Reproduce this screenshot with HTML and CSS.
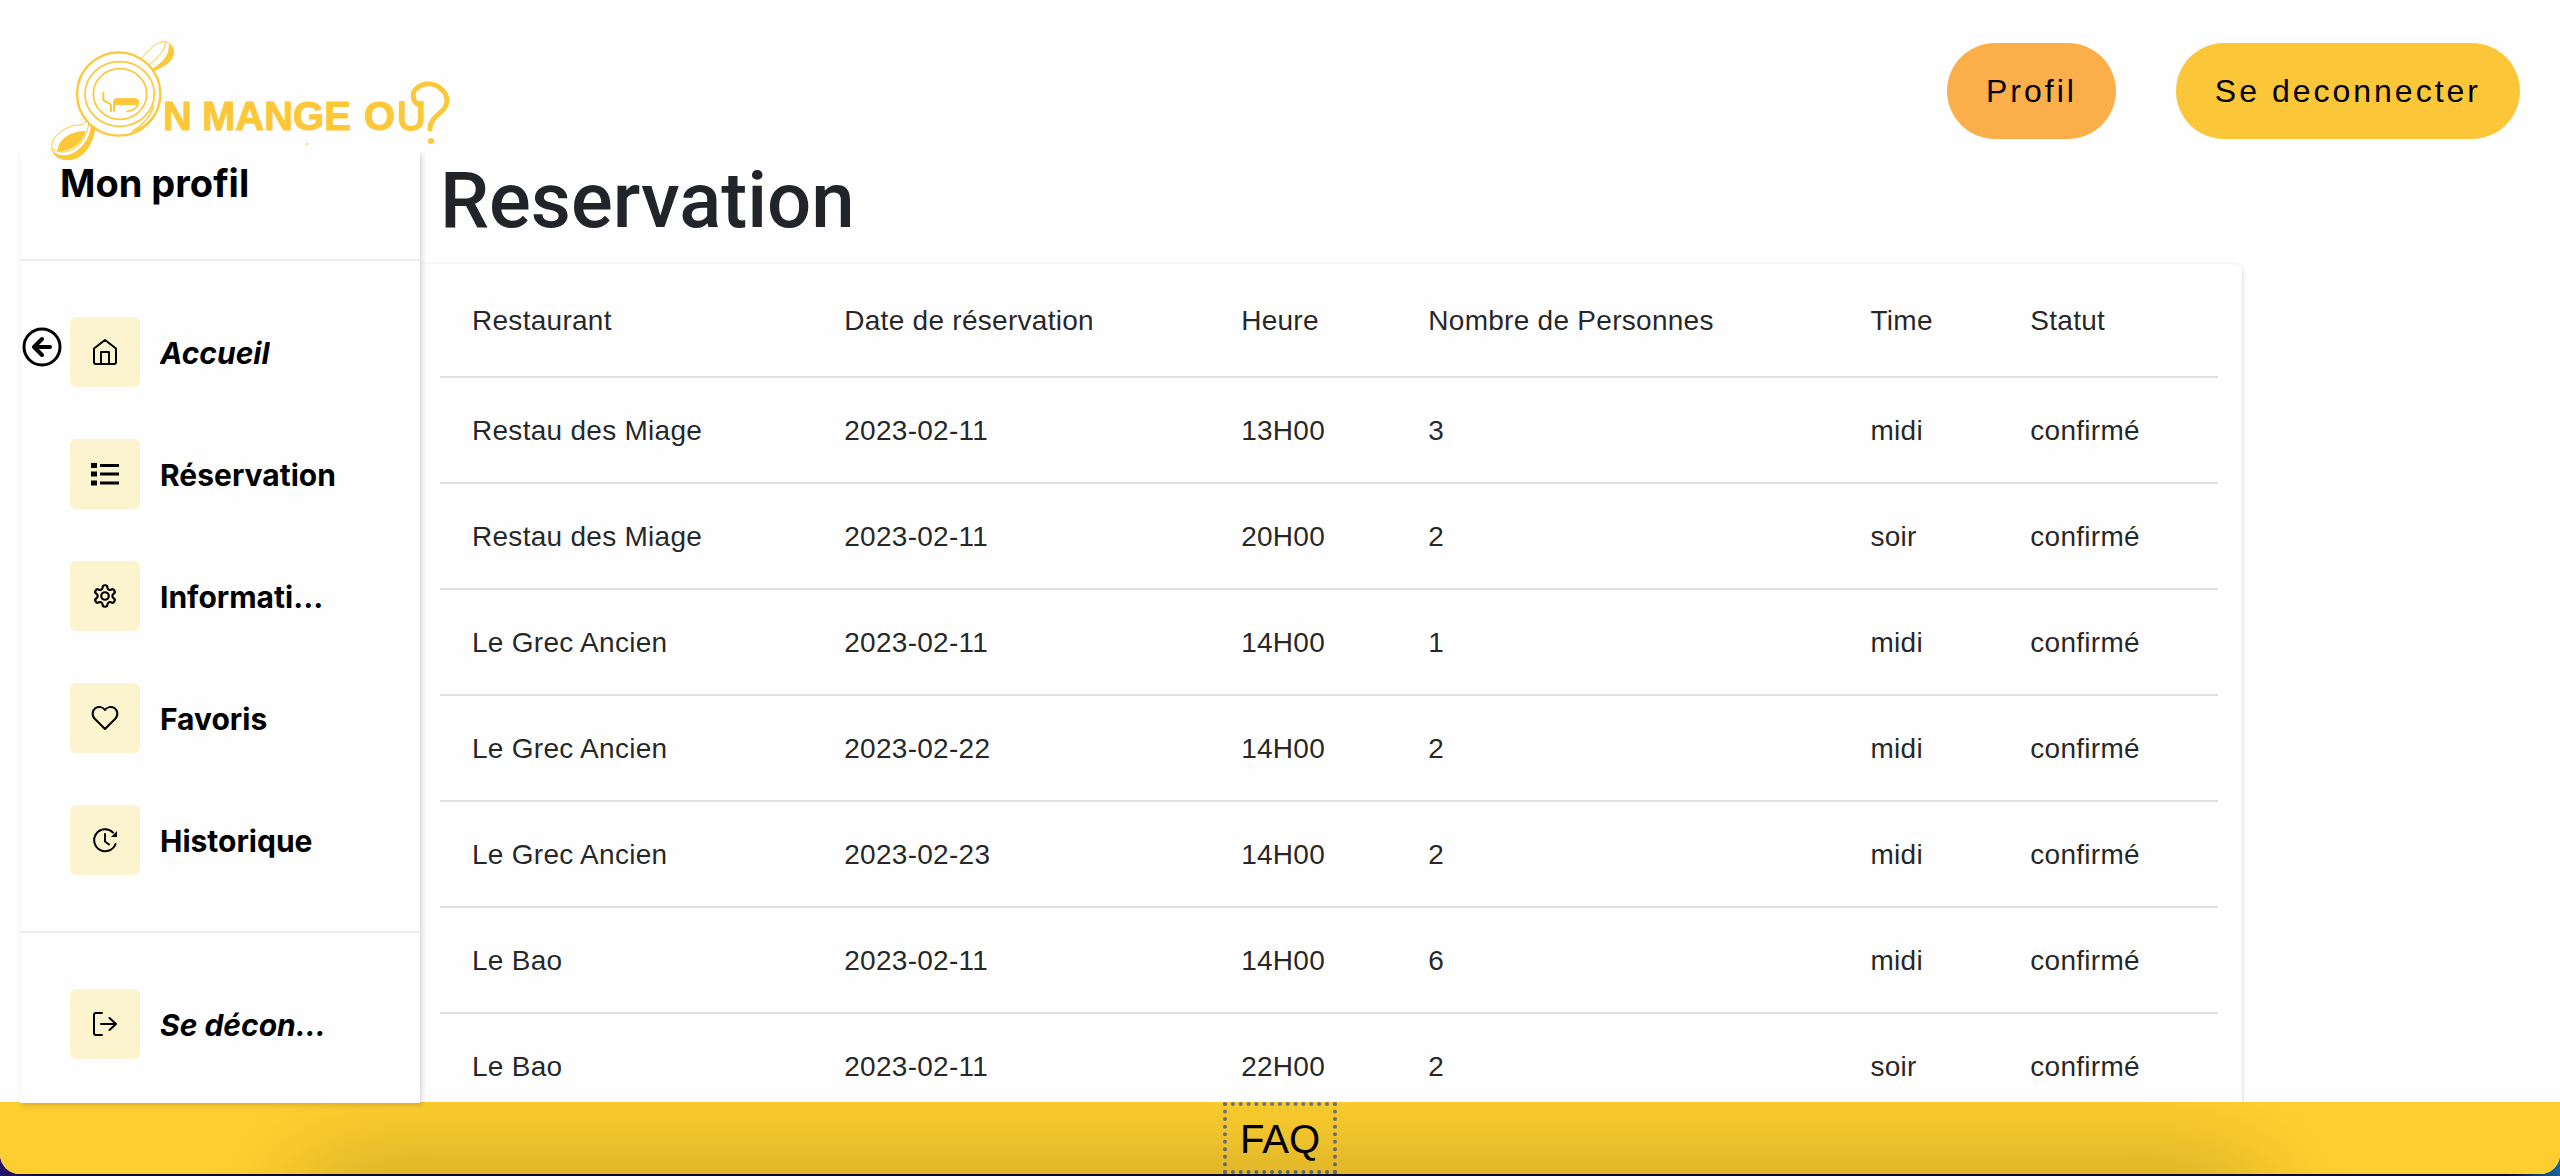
FILE: index.html
```html
<!DOCTYPE html>
<html lang="fr">
<head>
  <meta charset="utf-8">
  <meta name="viewport" content="width=device-width, initial-scale=1">
  <title>On mange où ? - Mon profil</title>
  <link rel="stylesheet" href="styles.css">
</head>
<body>
  <div class="app">
    <header class="header">
      <a class="logo" href="#" aria-label="On mange où ?">
        <svg class="logo-art" viewBox="50 38 402 124" aria-hidden="true">
          <!-- plate and spoon, drawn on a grid three times finer -->
          <g transform="scale(0.333333)" fill="none" stroke="#fcc838" stroke-linecap="round" stroke-linejoin="round">
            <circle cx="356" cy="282" r="125" stroke-width="7"/>
            <ellipse cx="359" cy="282" rx="104" ry="97" stroke-width="5"/>
            <ellipse cx="360" cy="282" rx="80" ry="76" stroke-width="5"/>
            <path d="M462 318C452 345 432 375 396 394C440 384 476 340 481 296" stroke-width="4"/>
            <path d="M423 176C440 160 462 128 490 125C510 124 521 140 521 156C518 190 480 202 462 212" stroke-width="3"/>
            <path d="M496 126C498 150 470 178 447 194" stroke-width="3"/>
            <path d="M507 132C522 140 525 160 516 176C504 196 478 204 461 213L457 207C482 190 508 172 507 132Z" fill="#fcc838" stroke="none"/>
            <path d="M258 362C252 380 236 373 215 378C182 390 154 414 155 440C157 466 180 480 205 479C246 476 284 430 283 380" stroke-width="3"/>
            <path d="M266 370C264 408 236 446 200 455C182 459 165 452 157 446" stroke-width="3"/>
            <path d="M258 393C228 390 174 410 173 453C210 457 244 434 258 393Z" fill="#fcc838" stroke="none"/>
            <path d="M157 452C175 470 204 470 228 454C254 436 270 410 273 376L285 380C284 430 250 480 205 480C180 480 160 468 157 452Z" fill="#fcc838" stroke="none"/>
            <path d="M310 278V300C316 310 334 304 333 320V334M342 334V306" stroke-width="6"/>
            <path d="M342 300Q343 296 350 296H408Q416 297 416 306V314H342Z" fill="#fcc838" stroke-width="3"/>
            <path d="M415 308C412 325 400 333 381 334" stroke-width="5"/>
          </g>
          <g class="logo-text">
            <text x="163" y="130">N</text>
            <text x="202" y="130">MANGE</text>
            <text x="364" y="130">O</text>
            <text class="logo-thin" x="397" y="130">U</text>
          </g>
          <!-- spiral hook over its dot -->
          <path d="M421 105C412 104 411 92 417 88C424 82 434 83 440 88C449 95 449 104 442 111C436 117 430 120 430 129" fill="none" stroke="#fcc838" stroke-width="5" stroke-linecap="round"/>
          <circle cx="431" cy="141" r="3" fill="#fcc838"/>
          <circle cx="307" cy="144" r="1" fill="#fcc838"/>
        </svg>
      </a>
      <nav class="actions" aria-label="Compte">
        <button class="pill pill-profile" type="button">Profil</button>
        <button class="pill" type="button">Se deconnecter</button>
      </nav>
    </header>

    <div class="content">
      <aside class="sidebar">
        <h2 class="sidebar-title">Mon profil</h2>
        <button class="collapse" type="button" aria-label="Réduire le menu">
          <svg viewBox="0 0 40 40" fill="none" stroke="#000" stroke-width="3" stroke-linecap="round" stroke-linejoin="round" aria-hidden="true"><circle cx="20" cy="20" r="18"/><path d="M28 20H13M20 12L12 20L20 28" stroke-width="4"/></svg>
        </button>
        <ul class="menu">
          <li><a class="item italic" href="#">
            <span class="icon"><svg viewBox="-14 -14 28 28" aria-hidden="true"><path d="M-11-3.500L0-12L11-3.500V10Q11 12 9 12H-9Q-11 12-11 10ZM-4 12V0H4V12"/></svg></span>
            <span class="label">Accueil</span></a></li>
          <li><a class="item" href="#">
            <span class="icon"><svg viewBox="-14 -14 28 28" aria-hidden="true"><path class="solid" d="M-14-11h6v5h-6ZM-14-2.500h6v5h-6ZM-14 6.500h6v5h-6ZM-5-10h19v3h-19ZM-5-1.500h19v3h-19ZM-5 7.500h19v3h-19Z"/></svg></span>
            <span class="label">Réservation</span></a></li>
          <li><a class="item" href="#">
            <span class="icon"><svg viewBox="-1 -1 26 26" aria-hidden="true"><path d="M12.220 2h-.440a2 2 0 0 0-2 2v.180a2 2 0 0 1-1 1.730l-.430.250a2 2 0 0 1-2 0l-.150-.080a2 2 0 0 0-2.730.730l-.220.380a2 2 0 0 0 .730 2.730l.150.100a2 2 0 0 1 1 1.720v.510a2 2 0 0 1-1 1.740l-.150.090a2 2 0 0 0-.730 2.730l.220.380a2 2 0 0 0 2.730.730l.150-.080a2 2 0 0 1 2 0l.430.250a2 2 0 0 1 1 1.730V20a2 2 0 0 0 2 2h.440a2 2 0 0 0 2-2v-.180a2 2 0 0 1 1-1.730l.430-.250a2 2 0 0 1 2 0l.150.080a2 2 0 0 0 2.730-.730l.220-.390a2 2 0 0 0-.730-2.730l-.150-.080a2 2 0 0 1-1-1.740v-.500a2 2 0 0 1 1-1.740l.150-.090a2 2 0 0 0 .730-2.730l-.220-.380a2 2 0 0 0-2.730-.730l-.150.080a2 2 0 0 1-2 0l-.430-.250a2 2 0 0 1-1-1.730V4a2 2 0 0 0-2-2z"/><circle cx="12" cy="12" r="3.500"/></svg></span>
            <span class="label">Informations</span></a></li>
          <li><a class="item" href="#">
            <span class="icon"><svg viewBox="-14 -14 28 28" aria-hidden="true"><path d="M0 11L-10.500 0.500C-14-3.500-12-8-9.500-10C-6-12-2-11 0-8C2-11 6-12 9.500-10C12-8 14-3.500 10.500 0.500Z"/></svg></span>
            <span class="label">Favoris</span></a></li>
          <li><a class="item" href="#">
            <span class="icon"><svg viewBox="-14 -14 28 28" aria-hidden="true"><path d="M10.500 4A11 11 0 1 1 8-7.500M0-6V1.500L4 4.500"/><path class="solid" d="M12-9V-3H6Z"/></svg></span>
            <span class="label">Historique</span></a></li>
        </ul>
        <ul class="menu menu-end">
          <li><a class="item italic" href="#">
            <span class="icon"><svg viewBox="-14 -14 28 28" aria-hidden="true"><path d="M-3-11H-9Q-11-11-11-9V9Q-11 11-9 11H-3M-4 0H11M4.500-6L11 0L4.500 6"/></svg></span>
            <span class="label">Se déconnecter</span></a></li>
        </ul>
      </aside>

      <main class="main">
        <h1 class="title">Reservation</h1>
        <div class="paper">
          <table class="table">
            <thead>
              <tr><th scope="col">Restaurant</th><th scope="col">Date de réservation</th><th scope="col">Heure</th><th scope="col">Nombre de Personnes</th><th scope="col">Time</th><th scope="col">Statut</th></tr>
            </thead>
            <tbody>
              <tr><td>Restau des Miage</td><td>2023-02-11</td><td>13H00</td><td>3</td><td>midi</td><td>confirmé</td></tr>
              <tr><td>Restau des Miage</td><td>2023-02-11</td><td>20H00</td><td>2</td><td>soir</td><td>confirmé</td></tr>
              <tr><td>Le Grec Ancien</td><td>2023-02-11</td><td>14H00</td><td>1</td><td>midi</td><td>confirmé</td></tr>
              <tr><td>Le Grec Ancien</td><td>2023-02-22</td><td>14H00</td><td>2</td><td>midi</td><td>confirmé</td></tr>
              <tr><td>Le Grec Ancien</td><td>2023-02-23</td><td>14H00</td><td>2</td><td>midi</td><td>confirmé</td></tr>
              <tr><td>Le Bao</td><td>2023-02-11</td><td>14H00</td><td>6</td><td>midi</td><td>confirmé</td></tr>
              <tr><td>Le Bao</td><td>2023-02-11</td><td>22H00</td><td>2</td><td>soir</td><td>confirmé</td></tr>
            </tbody>
          </table>
        </div>
      </main>
    </div>

    <footer class="footer">
      <a class="faq" href="#">FAQ</a>
    </footer>
  </div>
</body>
</html>
```

FILE: styles.css
```css
* {
  box-sizing: border-box;
}

body {
  margin: 0;
  height: 100vh;
  padding-bottom: 2px;
  overflow: hidden;
  background: linear-gradient(90deg, #26106a, #0b0a26 2%, #0b0a26 98%, #1766a0);
  font-family: "Liberation Sans", Arial, sans-serif;
  color: #212529;
}

.app {
  display: flex;
  flex-direction: column;
  height: 100%;
  overflow: hidden;
  background: #fefefe;
  border-radius: 0 0 20px 20px;
}

/* Header */

.header {
  display: flex;
  justify-content: space-between;
  align-items: flex-start;
  flex: none;
  height: 152px;
  padding: 38px 40px 0 50px;
  position: relative;
  z-index: 4;
  background: #fefefe;
}

.logo {
  display: block;
}

.logo-art {
  display: block;
  width: 402px;
  height: 124px;
}

.logo-text {
  font-size: 40px;
  font-weight: 700;
  fill: #fcc838;
  stroke: #fcc838;
  stroke-width: 1px;
  stroke-linejoin: round;
}

.logo-thin {
  font-weight: 400;
  stroke-width: 2px;
}

.actions {
  display: flex;
  gap: 60px;
  padding-top: 5px;
}

.pill {
  height: 96px;
  padding: 0 39px;
  border: 0;
  border-radius: 48px;
  background: #fbc638;
  color: #000;
  font-family: inherit;
  font-size: 32px;
  letter-spacing: 3px;
}

.pill-profile {
  background: #fbaf4a;
}

/* Sidebar */

.content {
  display: flex;
  flex: 1;
  align-items: flex-start;
  min-height: 0;
  padding-left: 20px;
}

.sidebar {
  flex: none;
  width: 400px;
  padding-bottom: 18px;
  position: relative;
  z-index: 3;
  background: #fefefe;
  box-shadow: 2px 2px 5px rgba(0, 0, 0, 0.16);
  font-family: Inter, Roboto, sans-serif;
  color: #000;
}

.sidebar-title {
  height: 107px;
  margin: 0;
  padding: 7px 40px;
  font-size: 38px;
  line-height: 48px;
  font-weight: 700;
}

.collapse {
  position: absolute;
  top: 175px;
  left: 2px;
  width: 40px;
  height: 40px;
  padding: 0;
  border: 0;
  background: none;
}

.collapse svg {
  display: block;
}

.menu {
  margin: 0;
  padding: 30px 0;
  border-top: 2px solid #eee;
  list-style: none;
}

.menu-end {
  padding-bottom: 0;
}

.item {
  display: flex;
  align-items: center;
  gap: 20px;
  height: 122px;
  padding: 0 80px 0 50px;
  color: #000;
  font-size: 30px;
  font-weight: 700;
  text-decoration: none;
}

.italic {
  font-style: italic;
}

.icon {
  display: grid;
  place-items: center;
  flex: none;
  width: 70px;
  height: 70px;
  border-radius: 6px;
  background: #fcf3cf;
}

.icon svg {
  width: 28px;
  height: 28px;
  fill: none;
  stroke: #000;
  stroke-width: 2px;
  stroke-linecap: round;
  stroke-linejoin: round;
}

.icon .solid {
  fill: #000;
  stroke: none;
}

.label {
  padding-top: 2px;
  overflow: hidden;
  text-overflow: ellipsis;
  white-space: nowrap;
  line-height: 48px;
}

/* Reservations */

.main {
  flex: 1;
  min-width: 0;
  padding-right: 318px;
}

.title {
  margin: 0 0 16px;
  padding: 2px 0 0 20px;
  font-family: Roboto, Inter, sans-serif;
  font-size: 78px;
  line-height: 94px;
  font-weight: 500;
}

.paper {
  margin-left: -4px;
  padding: 0 24px;
  border-radius: 8px;
  background: #fefefe;
  box-shadow: 0 2px 5px rgba(0, 0, 0, 0.18);
}

.table {
  width: 100%;
  border-collapse: collapse;
  color: rgba(0, 0, 0, 0.87);
  font-size: 28px;
  line-height: 40px;
  letter-spacing: 0.01em;
}

.table th,
.table td {
  padding: 33px 32px 31px;
  border-bottom: 2px solid #e0e0e0;
  font-weight: 400;
  text-align: left;
  white-space: nowrap;
}

.table th {
  line-height: 48px;
}

/* Footer */

.footer {
  display: flex;
  justify-content: center;
  flex: none;
  height: 72px;
  position: relative;
  z-index: 2;
  overflow: hidden;
  background: #fdce2f;
}

.footer::after {
  content: "";
  position: absolute;
  top: 100%;
  left: 12%;
  right: 12%;
  height: 120px;
  border-radius: 60px;
  box-shadow: 0 0 90px 16px rgba(0, 0, 0, 0.18);
}

.faq {
  padding: 0 13px;
  border: 4px dotted #6c757d;
  color: #000;
  font-size: 40px;
  line-height: 66px;
  text-decoration: none;
}
```
